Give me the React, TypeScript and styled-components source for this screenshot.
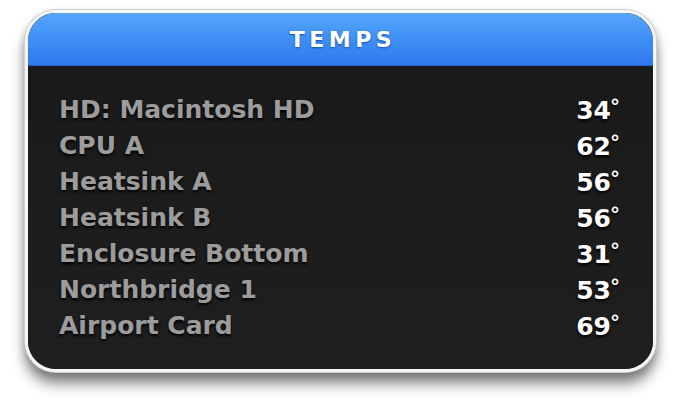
import styled, { createGlobalStyle } from 'styled-components';

const GlobalStyle = createGlobalStyle`
  html, body {
    margin: 0;
    padding: 0;
    background: #ffffff;
  }
`;

const Page = styled.div`
  width: 680px;
  height: 412px;
  padding: 10px 0 0 25px;
  box-sizing: border-box;
`;

const Widget = styled.div`
  width: 631px;
  box-sizing: border-box;
  border: 3px solid #f6f6f6;
  border-radius: 31px;
  overflow: hidden;
  box-shadow:
    0 0 0 1px #cfcfcf,
    0 12px 14px rgba(0, 0, 0, 0.45),
    0 4px 10px rgba(0, 0, 0, 0.2);
  background: #1c1c1d;
`;

const Header = styled.div`
  height: 53px;
  display: flex;
  align-items: center;
  justify-content: center;
  background: linear-gradient(to bottom, #56a6fa 0%, #3f8ff6 50%, #2f79ee 100%);
  border-bottom: 1px solid #1f5fc8;
  box-sizing: border-box;
`;

const Title = styled.h1`
  margin: 0;
  padding-left: 5px;
  font-family: 'DejaVu Sans', 'Liberation Sans', sans-serif;
  font-weight: bold;
  font-size: 22px;
  letter-spacing: 4.5px;
  color: #ffffff;
  text-shadow: 0 1px 2px rgba(0, 40, 120, 0.6);
`;

const Body = styled.div`
  padding: 25px 33px 26px 31px;
  background: linear-gradient(to bottom, #1a1a1a, #201f20);
`;

const Row = styled.div`
  display: flex;
  justify-content: space-between;
  align-items: center;
  height: 36px;
  font-family: 'DejaVu Sans', 'Liberation Sans', sans-serif;
  font-weight: bold;
  font-size: 25px;
`;

const Label = styled.span`
  color: #9c9c9c;
  text-shadow: 0 2px 3px #000000;
`;

const Value = styled.span`
  color: #ffffff;
  text-shadow: 0 2px 3px #000000;
`;

const Degree = styled.span`
  font-size: 20px;
  vertical-align: 6px;
  margin-left: -1px;
`;

const SENSORS = [
  { name: 'HD: Macintosh HD', temp: 34 },
  { name: 'CPU A', temp: 62 },
  { name: 'Heatsink A', temp: 56 },
  { name: 'Heatsink B', temp: 56 },
  { name: 'Enclosure Bottom', temp: 31 },
  { name: 'Northbridge 1', temp: 53 },
  { name: 'Airport Card', temp: 69 },
];

export default function App() {
  return (
    <Page>
      <GlobalStyle />
      <Widget>
        <Header>
          <Title>TEMPS</Title>
        </Header>
        <Body>
          {SENSORS.map((s) => (
            <Row key={s.name}>
              <Label>{s.name}</Label>
              <Value>
                {s.temp}
                <Degree>°</Degree>
              </Value>
            </Row>
          ))}
        </Body>
      </Widget>
    </Page>
  );
}
